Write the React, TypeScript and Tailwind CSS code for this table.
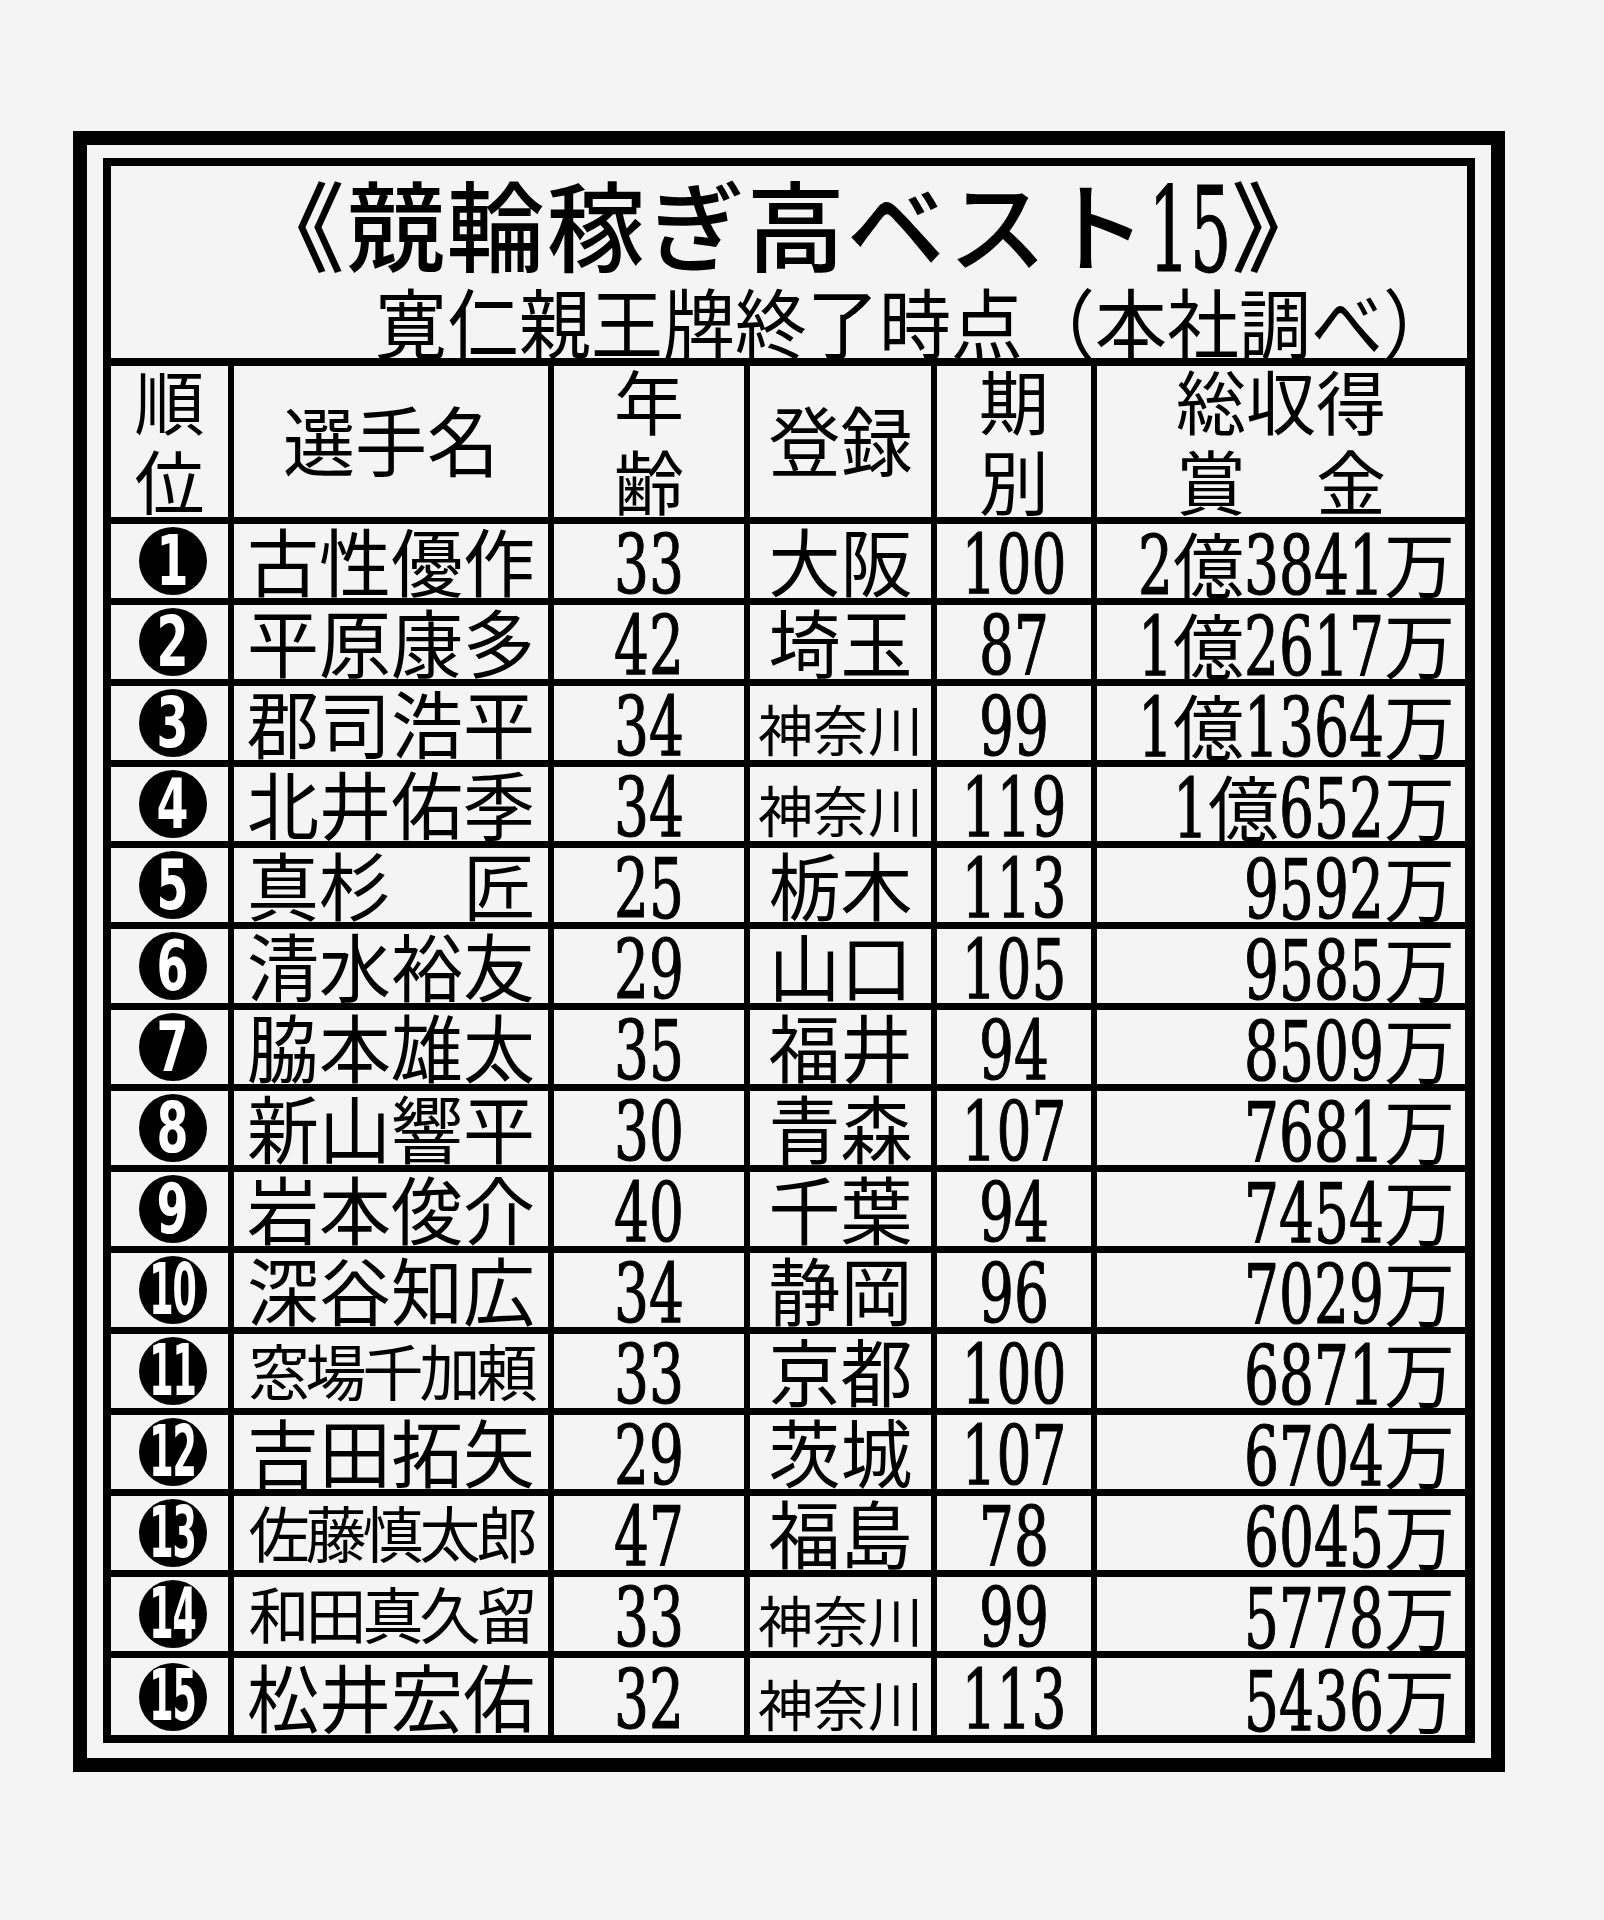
import React from "react";

type Row = [number, string, string, string, string, string];

const rows: Row[] = [
  [1, "古性優作", "33", "大阪", "100", "2億3841万"],
  [2, "平原康多", "42", "埼玉", "87", "1億2617万"],
  [3, "郡司浩平", "34", "神奈川", "99", "1億1364万"],
  [4, "北井佑季", "34", "神奈川", "119", "1億652万"],
  [5, "真杉　匠", "25", "栃木", "113", "9592万"],
  [6, "清水裕友", "29", "山口", "105", "9585万"],
  [7, "脇本雄太", "35", "福井", "94", "8509万"],
  [8, "新山響平", "30", "青森", "107", "7681万"],
  [9, "岩本俊介", "40", "千葉", "94", "7454万"],
  [10, "深谷知広", "34", "静岡", "96", "7029万"],
  [11, "窓場千加頼", "33", "京都", "100", "6871万"],
  [12, "吉田拓矢", "29", "茨城", "107", "6704万"],
  [13, "佐藤慎太郎", "47", "福島", "78", "6045万"],
  [14, "和田真久留", "33", "神奈川", "99", "5778万"],
  [15, "松井宏佑", "32", "神奈川", "113", "5436万"],
];

// condensed digits: font size picked for width, then stretched vertically
function Num({ s }: { s: string }) {
  return (
    <span className="inline-block font-['DejaVu_Serif',serif] text-[55px] leading-none scale-y-[1.5] translate-y-[5px] [-webkit-text-stroke:0.8px_black]">
      {s}
    </span>
  );
}

function Amount({ s }: { s: string }) {
  const parts = s.split(/(\d+)/).filter(Boolean);
  return (
    <span className="inline-flex items-baseline">
      {parts.map((p, i) =>
        /\d/.test(p) ? (
          <span
            key={i}
            className="inline-block font-['DejaVu_Serif',serif] text-[55px] leading-none scale-y-[1.5] origin-[50%_85%] translate-y-[3px] [-webkit-text-stroke:0.8px_black]"
          >
            {p}
          </span>
        ) : (
          <span key={i} className="text-[71px] leading-none">
            {p}
          </span>
        )
      )}
    </span>
  );
}

function Rank({ n }: { n: number }) {
  return (
    <div className="w-[68px] h-[68px] rounded-full bg-black flex items-center justify-center text-white">
      {n > 9 ? (
        <span className="inline-block font-['DejaVu_Sans',sans-serif] font-bold text-[35px] leading-none scale-y-[2.05] tracking-[-1px]">
          {n}
        </span>
      ) : (
        <span className="inline-block font-['DejaVu_Sans',sans-serif] font-bold text-[46px] leading-none scale-y-[1.5]">
          {n}
        </span>
      )}
    </div>
  );
}

const cell = "bg-[#f4f4f4] flex items-center justify-center";

function Stack({ top, bottom }: { top: string; bottom: string }) {
  return (
    <div className="flex flex-col items-center gap-[10px] text-[70px] leading-[70px] whitespace-pre -translate-y-[2px]">
      <span>{top}</span>
      <span>{bottom}</span>
    </div>
  );
}

export default function App() {
  return (
    <div className="w-[1604px] h-[1920px] bg-[#f4f4f4] pt-[131px] pl-[73px] text-black font-['Noto_Sans_CJK_JP','Noto_Sans_CJK_SC',sans-serif]">
      <div className="w-[1432px] h-[1641px] border-[14px] border-black pt-[13px] pl-[16px] pr-[16px] pb-[15px]">
        <div className="h-full border-[8px] border-black flex flex-col">
          <div className="h-[200px] border-b-[8px] border-black flex flex-col">
            <div className="flex justify-center items-baseline pt-[6px] text-[98px] leading-none font-medium tracking-[2px]">
              <span>《競輪稼ぎ高ベスト</span>
              <span className="inline-block font-['DejaVu_Serif',serif] font-normal text-[65px] leading-none scale-y-[1.8] origin-[50%_85%] translate-y-[7px] tracking-[0px] [-webkit-text-stroke:0.6px_black]">
                15
              </span>
              <span>》</span>
            </div>
            <div className="flex justify-end pr-[12px] pt-[10px] text-[72px] leading-none">
              <span className="inline-block scale-y-[1.06]">寛仁親王牌終了時点（本社調べ）</span>
            </div>
          </div>
          <div className="grid grid-cols-[117px_314px_190px_181px_154px_368px] grid-rows-[151px_repeat(14,74px)_77px] gap-x-[6px] gap-y-[7px] bg-black flex-1">
            <div className={cell}>
              <Stack top="順" bottom="位" />
            </div>
            <div className={`${cell} text-[72px] leading-none`}>
              <span className="inline-block -translate-y-[4px] scale-y-[1.05]">選手名</span>
            </div>
            <div className={cell}>
              <Stack top="年" bottom="齢" />
            </div>
            <div className={`${cell} text-[72px] leading-none`}>
              <span className="inline-block -translate-y-[4px] scale-y-[1.05]">登録</span>
            </div>
            <div className={cell}>
              <Stack top="期" bottom="別" />
            </div>
            <div className={cell}>
              <Stack top="総収得" bottom="賞　金" />
            </div>
            {rows.map(([n, name, age, reg, gen, amt]) => (
              <React.Fragment key={n}>
                <div className={`${cell} pl-[6px]`}>
                  <Rank n={n} />
                </div>
                <div className={cell}>
                  {name.length > 4 ? (
                    <span className="inline-block text-[61px] leading-none tracking-[-4px] whitespace-pre -translate-y-[2px]">
                      {name}
                    </span>
                  ) : (
                    <span className="inline-block text-[72px] leading-none whitespace-pre -translate-y-[2px] scale-y-[1.03]">
                      {name}
                    </span>
                  )}
                </div>
                <div className={cell}>
                  <Num s={age} />
                </div>
                {reg.length > 2 ? (
                  <div className="bg-[#f4f4f4] flex items-end justify-center pb-[5px]">
                    <span className="text-[55px] leading-none">{reg}</span>
                  </div>
                ) : (
                  <div className={cell}>
                    <span className="inline-block text-[72px] leading-none -translate-y-[2px] scale-y-[1.03]">
                      {reg}
                    </span>
                  </div>
                )}
                <div className={cell}>
                  <Num s={gen} />
                </div>
                <div className="bg-[#f4f4f4] flex items-center justify-end pr-[10px] pt-[5px]">
                  <Amount s={amt} />
                </div>
              </React.Fragment>
            ))}
          </div>
        </div>
      </div>
    </div>
  );
}
